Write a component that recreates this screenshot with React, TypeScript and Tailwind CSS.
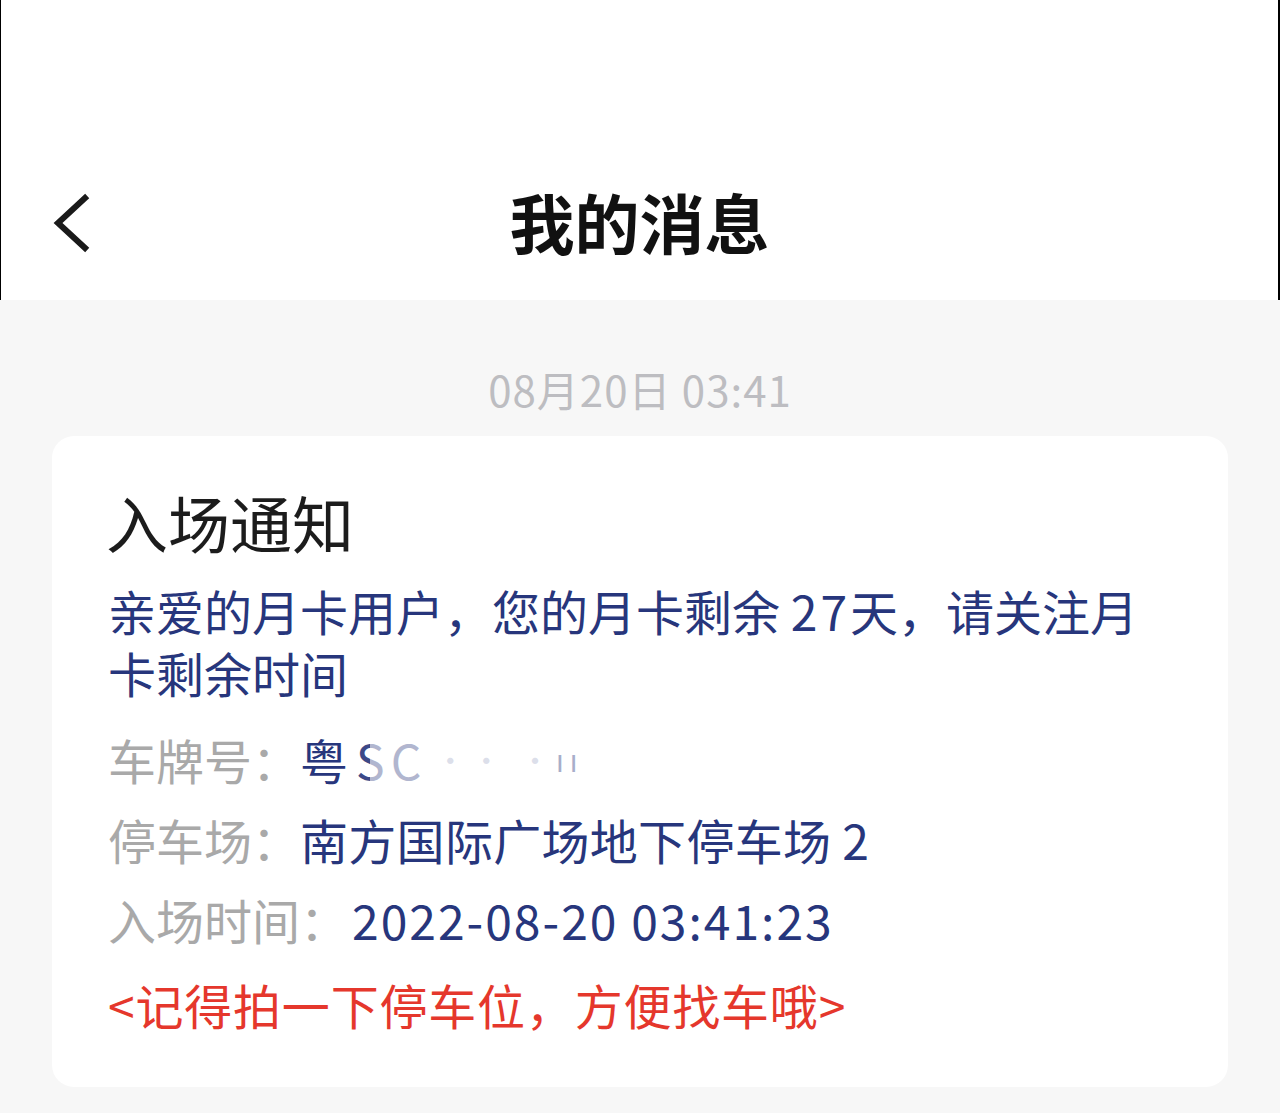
import React from 'react';

const font = { fontFamily: '"Noto Sans CJK SC", "Noto Sans", sans-serif' };

function BackIcon() {
  return (
    <svg width="44" height="64" viewBox="0 0 44 64" fill="none">
      <path d="M33 6 L6 31 L33 56" stroke="#1a1a1a" strokeWidth="6" strokeLinecap="square" strokeLinejoin="miter" />
    </svg>
  );
}

function Row({ label, children }: { label: string; children: React.ReactNode }) {
  return (
    <div className="flex items-center text-[48px] leading-[80px]">
      <span className="text-[#a9a9a9]">{label}</span>
      <span className="text-[#27367c]">{children}</span>
    </div>
  );
}

export default function App() {
  return (
    <div className="min-h-[1113px] w-[1280px] bg-[#f7f7f7]" style={font}>
      {/* Header */}
      <div className="h-[300px] border-l border-r-2 border-black bg-white">
        <div className="relative flex h-[90px] translate-y-[176px] items-center justify-center">
          <button className="absolute left-[51px] top-[16px]">
            <BackIcon />
          </button>
          <h1 className="text-[65px] font-bold leading-[90px] text-[#111]">我的消息</h1>
        </div>
      </div>

      {/* Message list */}
      <div className="pt-[65px]">
        <div className="text-center text-[42px] leading-[48px] tracking-[1px] text-[#bdbdc1]">08月20日 03:41</div>

        <div className="mx-[52px] mt-[23px] rounded-[22px] bg-white pb-[43px] pl-[56px] pr-[56px] pt-[50px]">
          <div className="-ml-[2px] text-[62px] leading-[72px] text-[#1c1c1c]">入场通知</div>

          <p className="mt-[21px] text-[48px] leading-[62px] text-[#27367c]">
            亲爱的月卡用户，您的月卡剩余 <span className="tracking-[3px]">27</span>天，请关注月卡剩余时间
          </p>

          <div className="mt-[16px]">
            <Row label="车牌号：">
              <span className="relative inline-flex items-center">
                <span>粤</span>
                <span className="ml-[8px] tracking-[6px] opacity-90">SC</span>
                <span className="ml-[8px] text-[30px] tracking-[6px] opacity-40">·· ·ıı</span>
                <span className="absolute left-[70px] top-[10px] h-[60px] w-[180px] bg-white/60" />
              </span>
            </Row>
            <Row label="停车场：">
              <span className="tracking-[0.3px]">南方国际广场地下停车场 2</span>
            </Row>
            <Row label="入场时间：">
              <span className="ml-[4px] tracking-[2px]">2022-08-20 03:41:23</span>
            </Row>
          </div>

          <div className="mt-[5px] text-[48px] leading-[80px] tracking-[0.8px] text-[#e5372c]">
            &lt;记得拍一下停车位，方便找车哦&gt;
          </div>
        </div>
      </div>
    </div>
  );
}
